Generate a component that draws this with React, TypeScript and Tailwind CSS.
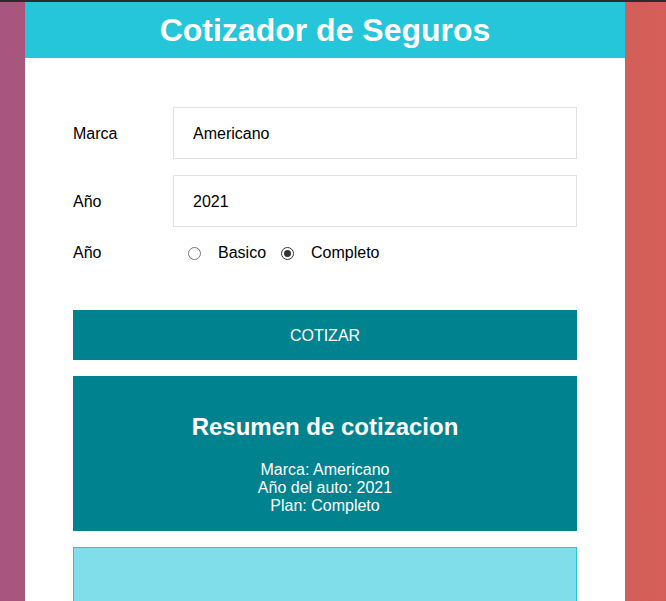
import React from "react";

function Radio({ checked }: { checked?: boolean }) {
  return (
    <span
      className={
        "flex h-[13px] w-[13px] flex-none items-center justify-center rounded-full border bg-white " +
        (checked ? "border-[#333333]" : "border-[#767676]")
      }
    >
      {checked ? <span className="h-[7px] w-[7px] rounded-full bg-[#333333]" /> : null}
    </span>
  );
}

export default function App() {
  return (
    <div
      className="min-h-screen border-t-2 border-[#2b2b2b] bg-gradient-to-r from-[#a7557f] to-[#d55f58] text-black"
      style={{ fontFamily: '"Liberation Sans", Arial, sans-serif' }}
    >
      <div className="ml-[25px] min-h-[599px] w-[600px] bg-white">
        <header className="flex h-[56px] items-center justify-center bg-[#26c6da]">
          <h1 className="text-[32px] font-bold leading-[37px] text-white">Cotizador de Seguros</h1>
        </header>

        <div className="px-12 pt-[49px] pb-8">
          <div className="mb-4 flex items-center">
            <label className="w-[100px] flex-none pt-[2px] text-base">Marca</label>
            <div className="flex h-[52px] flex-1 items-center border border-[#e1e1e1] px-[19px] pt-[2px] text-base">
              Americano
            </div>
          </div>
          <div className="mb-4 flex items-center">
            <label className="w-[100px] flex-none pt-[2px] text-base">Año</label>
            <div className="flex h-[52px] flex-1 items-center border border-[#e1e1e1] px-[19px] pt-[2px] text-base">
              2021
            </div>
          </div>
          <div className="flex h-[18px] items-center pt-[2px] text-base leading-[18px]">
            <label className="w-[100px] flex-none">Año</label>
            <div className="flex items-center pl-[15px]">
              <Radio />
              <span className="ml-[17px]">Basico</span>
              <span className="ml-[15px]">
                <Radio checked />
              </span>
              <span className="ml-[17px]">Completo</span>
            </div>
          </div>

          <button className="mt-[49px] flex h-[50px] w-full items-center justify-center bg-[#00838f] pt-[2px] text-base text-white">
            COTIZAR
          </button>

          <div className="mt-4 bg-[#00838f] px-4 pt-4 pb-4 text-center text-white">
            <h2 className="mt-[21px] mb-5 text-2xl font-bold leading-[28px]">Resumen de cotizacion</h2>
            <p className="text-base leading-[18px]">Marca: Americano</p>
            <p className="text-base leading-[18px]">Año del auto: 2021</p>
            <p className="text-base leading-[18px]">Plan: Completo</p>
          </div>

          <div className="mt-4 h-[100px] border border-[#26c6da] bg-[#80deea]" />
        </div>
      </div>
    </div>
  );
}
